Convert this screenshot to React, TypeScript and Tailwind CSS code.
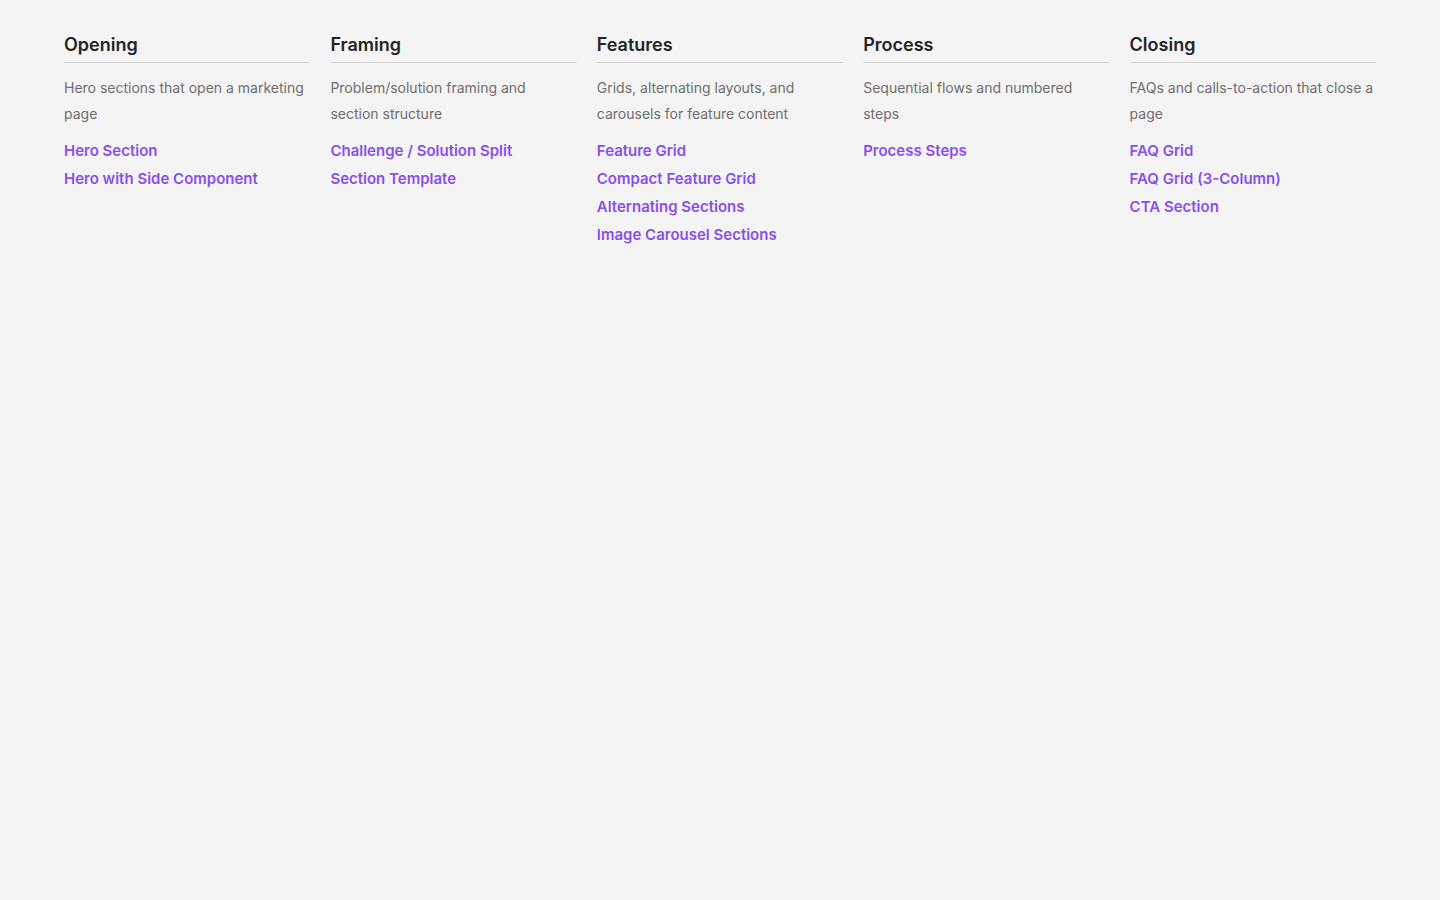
import React from "react";

type Group = {
  title: string;
  blurb: string;
  links: string[];
};

const groups: Group[] = [
  {
    title: "Opening",
    blurb: "Hero sections that open a marketing page",
    links: ["Hero Section", "Hero with Side Component"],
  },
  {
    title: "Framing",
    blurb: "Problem/solution framing and section structure",
    links: ["Challenge / Solution Split", "Section Template"],
  },
  {
    title: "Features",
    blurb: "Grids, alternating layouts, and carousels for feature content",
    links: [
      "Feature Grid",
      "Compact Feature Grid",
      "Alternating Sections",
      "Image Carousel Sections",
    ],
  },
  {
    title: "Process",
    blurb: "Sequential flows and numbered steps",
    links: ["Process Steps"],
  },
  {
    title: "Closing",
    blurb: "FAQs and calls-to-action that close a page",
    links: ["FAQ Grid", "FAQ Grid (3-Column)", "CTA Section"],
  },
];

export default function App() {
  return (
    <div
      className="min-h-screen bg-[#f4f4f4] px-16 pt-[31px]"
      style={{ fontFamily: "Inter, 'Noto Sans', sans-serif" }}
    >
      <div className="grid grid-cols-5 gap-5">
        {groups.map((g) => (
          <section key={g.title} className="flex flex-col">
            {/* Group heading */}
            <h2 className="border-b border-[#d6d6d6] pb-[3px] text-lg leading-7 font-semibold text-[#242424]">
              {g.title}
            </h2>
            <p className="mt-3 text-sm leading-[26px] text-[#6e6e6e]">
              {g.blurb}
            </p>
            {/* Section links */}
            <ul className="mt-[10px] flex flex-col">
              {g.links.map((l) => (
                <li key={l}>
                  <a
                    href="#"
                    className="text-[15px] leading-7 font-semibold text-[#8b4fe8] hover:underline"
                  >
                    {l}
                  </a>
                </li>
              ))}
            </ul>
          </section>
        ))}
      </div>
    </div>
  );
}
